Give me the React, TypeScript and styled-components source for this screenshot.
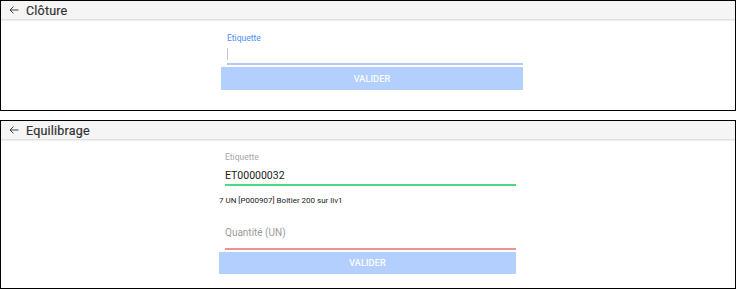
import React from 'react';
import styled, { createGlobalStyle } from 'styled-components';

const GlobalStyle = createGlobalStyle`
  html, body {
    margin: 0;
    padding: 0;
    background: #ffffff;
    font-family: Roboto, "Liberation Sans", Arial, sans-serif;
  }
`;

const Page = styled.div`
  display: flex;
  flex-direction: column;
  gap: 9px;
  width: 736px;
`;

const Panel = styled.section<{ $height: number }>`
  box-sizing: border-box;
  height: ${(p) => p.$height}px;
  border: 1px solid #000;
  background: #fff;
  display: flex;
  flex-direction: column;
`;

const Header = styled.div`
  height: 18px;
  display: flex;
  align-items: center;
  background: #f5f5f5;
  border-bottom: 1px solid #e0e0e0;
  box-shadow: 0 1px 1px rgba(0, 0, 0, 0.06);
`;

const BackButton = styled.span`
  width: 25px;
  display: flex;
  justify-content: center;
  svg {
    display: block;
  }
`;

const Title = styled.h1`
  margin: 0;
  font-size: 12.5px;
  font-weight: 400;
  color: #333;
  letter-spacing: 0.2px;
  -webkit-text-stroke: 0.2px #333;
`;

const Form = styled.div<{ $width: number; $offset: number }>`
  width: ${(p) => p.$width}px;
  margin-left: ${(p) => p.$offset}px;
  display: flex;
  flex-direction: column;
`;

const Field = styled.div<{ $line: string; $top: number }>`
  margin: ${(p) => p.$top}px 0 0 6px;
  border-bottom: 2px solid ${(p) => p.$line};
  display: flex;
  flex-direction: column;
`;

const Label = styled.label<{ $color: string }>`
  font-size: 8.5px;
  color: ${(p) => p.$color};
  line-height: 10px;
`;

const InputText = styled.div<{ $color: string; $size: number; $height: number; $pad: number }>`
  height: ${(p) => p.$height}px;
  display: flex;
  align-items: flex-end;
  padding-bottom: ${(p) => p.$pad}px;
  box-sizing: border-box;
  font-size: ${(p) => p.$size}px;
  line-height: 14px;
  color: ${(p) => p.$color};
`;

const Caret = styled.span`
  width: 1px;
  height: 12px;
  background: #c8c8c8;
`;

const Info = styled.p`
  margin: 10px 0 0 0;
  font-size: 8px;
  color: #222;
  line-height: 10px;
`;

const Button = styled.button<{ $height: number }>`
  margin-top: 2px;
  height: ${(p) => p.$height}px;
  border: none;
  border-radius: 1px;
  background: #b3cffd;
  color: #fff;
  font-family: inherit;
  font-size: 9px;
  font-weight: 400;
  letter-spacing: 0.2px;
  -webkit-text-stroke: 0.2px #fff;
  box-shadow: 0 0 1px rgba(0, 0, 0, 0.15);
`;

function ArrowBack() {
  return (
    <svg width="12" height="12" viewBox="0 0 24 24" fill="none" stroke="#444" strokeWidth="2">
      <path d="M21 12H4M11 5l-7 7 7 7" />
    </svg>
  );
}

function App() {
  return (
    <Page>
      <GlobalStyle />
      <Panel $height={111}>
        <Header>
          <BackButton>
            <ArrowBack />
          </BackButton>
          <Title>Clôture</Title>
        </Header>
        <Form $width={302} $offset={220}>
          <Field $line="#b0cbfb" $top={13}>
            <Label $color="#4d8ef7">Etiquette</Label>
            <InputText $color="#222" $size={11} $height={20} $pad={3}>
              <Caret />
            </InputText>
          </Field>
          <Button type="button" $height={23}>VALIDER</Button>
        </Form>
      </Panel>
      <Panel $height={169}>
        <Header>
          <BackButton>
            <ArrowBack />
          </BackButton>
          <Title>Equilibrage</Title>
        </Header>
        <Form $width={297} $offset={218}>
          <Field $line="#4ada85" $top={12}>
            <Label $color="#a8a8a8">Etiquette</Label>
            <InputText $color="#222" $size={10.5} $height={22} $pad={1}>ET00000032</InputText>
          </Field>
          <Info>7 UN [P000907] Boitier 200 sur liv1</Info>
          <Field $line="#f09090" $top={12}>
            <InputText $color="#9a9a9a" $size={10} $height={30} $pad={8}>Quantité (UN)</InputText>
          </Field>
          <Button type="button" $height={22}>VALIDER</Button>
        </Form>
      </Panel>
    </Page>
  );
}

export default App;
